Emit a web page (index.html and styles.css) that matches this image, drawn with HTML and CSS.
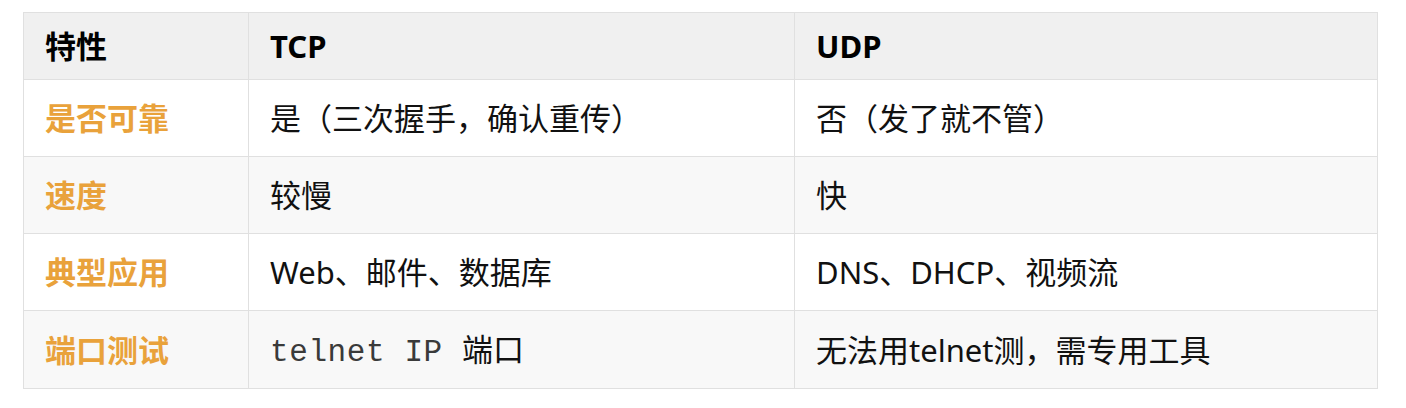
FILE: index.html
```html
<!DOCTYPE html>
<html lang="zh-CN">
<head>
<meta charset="utf-8">
<link rel="stylesheet" href="styles.css">
</head>
<body>
<div class="wrap">
<table class="cmp">
  <colgroup>
    <col class="c1"><col class="c2"><col class="c3">
  </colgroup>
  <thead>
    <tr><th>特性</th><th>TCP</th><th>UDP</th></tr>
  </thead>
  <tbody>
    <tr><td class="key">是否可靠</td><td>是（三次握手，确认重传）</td><td>否（发了就不管）</td></tr>
    <tr><td class="key">速度</td><td>较慢</td><td>快</td></tr>
    <tr><td class="key">典型应用</td><td>Web、邮件、数据库</td><td>DNS、DHCP、视频流</td></tr>
    <tr><td class="key">端口测试</td><td><code class="mono">telnet IP </code>端口</td><td>无法用telnet测，需专用工具</td></tr>
  </tbody>
</table>
</div>
</body>
</html>
```
FILE: styles.css
```css
html, body {
  margin: 0;
  padding: 0;
  background: #ffffff;
}
.wrap {
  padding: 12px 29px 0 23px;
}
.cmp {
  width: 1354px;
  border-collapse: collapse;
  table-layout: fixed;
  font-family: "Noto Sans", "Noto Sans CJK SC", sans-serif;
  font-size: 31px;
  line-height: 36px;
  color: #111111;
}
.c1 { width: 225px; }
.c2 { width: 546px; }
.c3 { width: 583px; }
.cmp th, .cmp td {
  border: 1px solid #e0e0e0;
  text-align: left;
  vertical-align: middle;
  white-space: nowrap;
}
.cmp th {
  background: #f0f0f0;
  font-weight: 700;
  color: #000000;
  padding: 15px 21px;
}
.cmp td {
  padding: 20px 21px;
}
.cmp tbody tr:nth-child(even) td {
  background: #f8f8f8;
}
.cmp td.key {
  color: #e9a23b;
  font-weight: 700;
}
.mono {
  font-family: "Liberation Mono", "Courier New", monospace;
  font-size: 31px;
  line-height: 1;
  letter-spacing: 0.6px;
  color: #3a3a3a;
}
```
